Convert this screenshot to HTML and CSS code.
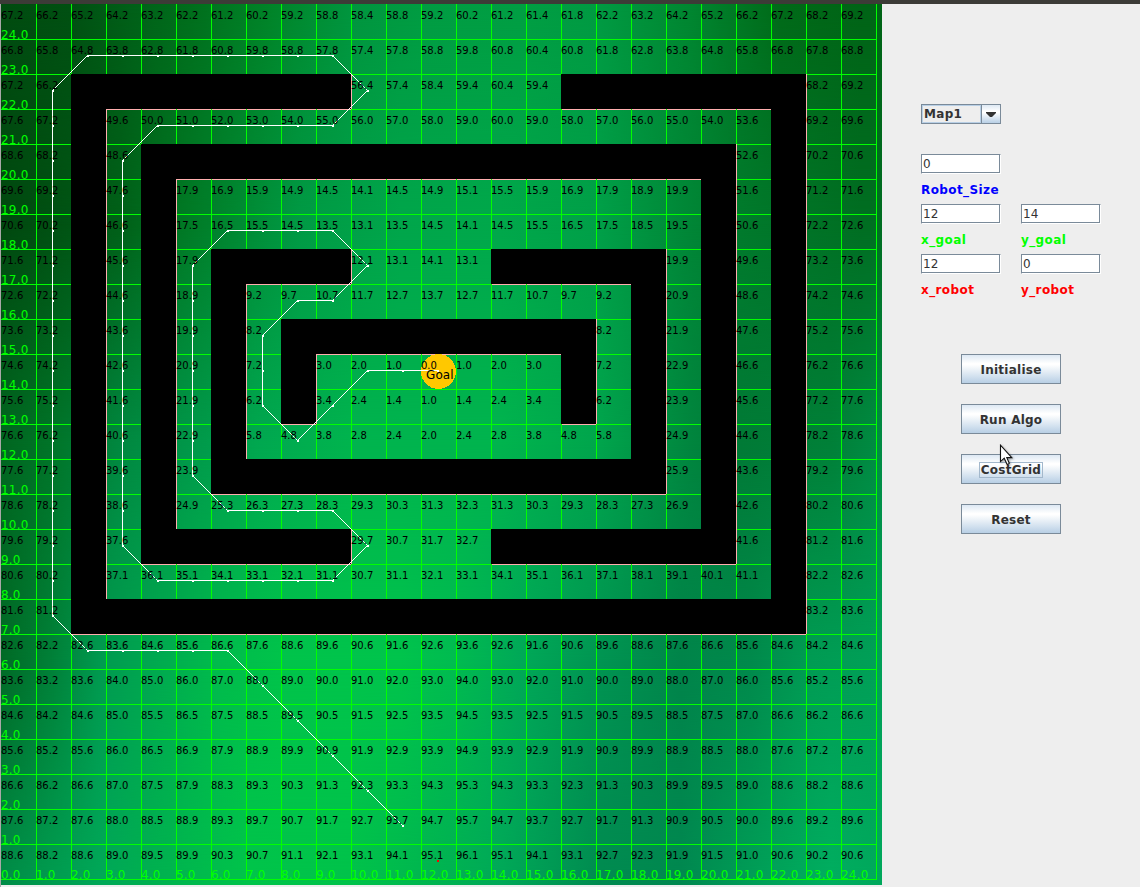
FILE: index.html
```html
<!DOCTYPE html>
<html lang="en">
<head>
<meta charset="utf-8">
<title>Path planner</title>
<link rel="stylesheet" href="styles.css">
</head>
<body>
<div class="titlebar"></div>
<div class="window">
  <main class="map">
    <div class="shade shade-1"></div>
    <div class="shade shade-2"></div>
    <div class="shade shade-3"></div>
    <div class="shade shade-4"></div>
    <div class="shade shade-5"></div>
    <div class="grid" id="grid"></div>
    <svg class="route" id="route" width="881" height="881" viewBox="1 4 881 881">
      <circle cx="438.5" cy="371.5" r="17.5" fill="#ffc800"/>
      <rect x="437" y="860" width="2" height="2" fill="#f00"/>
    </svg>
    <span class="goal">Goal</span>
  </main>
  <aside class="panel">
    <div class="combo"><span class="combo-text">Map1</span><span class="combo-arrow"><svg width="10" height="5" viewBox="0 0 10 5"><path d="M0 0H10V1L6 5H4L0 1Z" fill="#333"/></svg></span></div>
    <div class="fields">
      <div class="field"><div class="input">0</div><div class="label blue">Robot_Size</div></div>
      <div class="field"></div>
      <div class="field"><div class="input">12</div><div class="label green">x_goal</div></div>
      <div class="field"><div class="input">14</div><div class="label green">y_goal</div></div>
      <div class="field"><div class="input">12</div><div class="label red">x_robot</div></div>
      <div class="field"><div class="input">0</div><div class="label red">y_robot</div></div>
    </div>
    <div class="buttons">
      <div class="button"><span>Initialise</span></div>
      <div class="button"><span>Run Algo</span></div>
      <div class="button"><span class="focused">CostGrid</span></div>
      <div class="button"><span>Reset</span></div>
    </div>
    <svg class="cursor" width="16" height="24" viewBox="0 0 16 24"><path d="M1.5 1.2V17.6L5.2 14.2L8 20.3Q9.6 20.6 10.3 19.3L7.8 13.6H12.8Z" fill="#fff" stroke="#111" stroke-width="1.1"/></svg>
  </aside>
</div>
<script src="map.js"></script>
</body>
</html>
```
FILE: styles.css
```css
* { box-sizing: border-box; }
body {
  margin: 0;
  width: 1140px;
  height: 887px;
  overflow: hidden;
  background: #eee;
  font-family: "DejaVu Sans", sans-serif;
}
.titlebar { height: 4px; background: #3c3b37; }
.window { display: flex; height: 883px; border-left: 1px solid #a8a8a8; }
.map { position: relative; width: 881px; height: 881px; flex: none; overflow: hidden; }

/* Terrain: horizontal gradients blended into each other from top to bottom */
.shade { position: absolute; inset: 0; }
.shade-1 {
  background: linear-gradient(90deg, #004c10 0, #005012 70px, #006018 130px, #006e1c 190px, #008428 270px, #00953e 350px, #009c42 420px, #009e43 520px, #009a42 600px, #008630 690px, #006a18 780px, #006416 860px);
}
.shade-2 {
  background: linear-gradient(90deg, #00480f 0, #005012 50px, #006018 120px, #007824 180px, #008832 235px, #009a45 300px, #00a64b 400px, #00a84b 500px, #009f48 600px, #008838 680px, #007a2c 740px, #006e22 860px);
  -webkit-mask: linear-gradient(transparent 0, #000 220px);
  mask: linear-gradient(transparent 0, #000 220px);
}
.shade-3 {
  background: linear-gradient(90deg, #006620 0, #007428 50px, #008840 120px, #00984a 190px, #00a850 260px, #00b44e 350px, #00b44e 500px, #00a44c 600px, #00853e 690px, #007a36 740px, #008038 830px, #008c44 880px);
  -webkit-mask: linear-gradient(transparent 220px, #000 440px);
  mask: linear-gradient(transparent 220px, #000 440px);
}
.shade-4 {
  background: linear-gradient(90deg, #006a26 0, #008038 50px, #009a50 100px, #00a850 150px, #00bc4c 220px, #00c44a 280px, #00c44c 400px, #00bc50 450px, #00a858 520px, #009452 600px, #00844a 680px, #008a4c 750px, #009c54 810px, #00a058 880px);
  -webkit-mask: linear-gradient(transparent 440px, #000 660px);
  mask: linear-gradient(transparent 440px, #000 660px);
}
.shade-5 {
  background: linear-gradient(90deg, #008c48 0, #009c50 50px, #00a858 100px, #00b050 150px, #00c44a 250px, #00c24a 350px, #00b450 430px, #00a858 500px, #008a50 600px, #008850 680px, #00a058 760px, #00ae60 830px, #00a85c 880px);
  -webkit-mask: linear-gradient(transparent 660px, #000 881px);
  mask: linear-gradient(transparent 660px, #000 881px);
}

.grid {
  position: relative;
  display: grid;
  grid-template-columns: repeat(25, 35px);
  grid-auto-rows: 35px;
  width: 876px;
  height: 876px;
  border-right: 1px solid #0f0;
  border-bottom: 1px solid #0f0;
}
.cell {
  --left: #0f0;
  --top: #0f0;
  display: flex;
  flex-direction: column;
  justify-content: space-between;
  padding-top: 6px;
  background:
    linear-gradient(var(--left), var(--left)) 0 0 / 1px 100% no-repeat,
    linear-gradient(var(--top), var(--top)) 0 0 / 100% 1px no-repeat;
}
.first-col { --left: transparent; }
.first-row { --top: transparent; }
.after-wall { --left: #ffafaf; }
.below-wall { --top: #ffafaf; }
.wall { background: #000; }
.value { position: relative; z-index: 2; font-size: 10px; line-height: 12px; color: #000; }
.axis { position: relative; z-index: 2; font-size: 12px; line-height: 14px; margin-bottom: -3px; letter-spacing: .2px; color: #0f0; }
.route { position: absolute; left: 0; top: 0; z-index: 1; shape-rendering: crispEdges; }
.goal { position: absolute; left: 425px; top: 364px; z-index: 3; font-size: 12px; line-height: 14px; letter-spacing: .1px; color: #000; }

.panel {
  position: relative;
  flex: 1;
  padding: 100px 0 0 39px;
  font-size: 12px;
  line-height: 14px;
  color: #333;
}
.combo {
  display: flex;
  width: 80px;
  height: 20px;
  border: 1px solid #7a8a99;
}
.combo-text { flex: 1; border: 1px solid #b8cfe5; padding: 1px 0 0 1px; font-weight: bold; letter-spacing: .3px; }
.combo-arrow {
  display: flex;
  align-items: center;
  justify-content: center;
  width: 19px;
  padding-top: 1px;
  border-left: 1px solid #7a8a99;
  background: linear-gradient(#dde8f3, #fff 35%, #fff 42%, #b8cfe5);
}
.fields { display: grid; grid-template-columns: 100px 100px; grid-auto-rows: 50px; padding-top: 30px; }
.input {
  width: 80px;
  height: 20px;
  padding: 2px 0 0 1px;
  background: #fff;
  border: 1px solid;
  border-color: #7a8a99 #fff #fff #7a8a99;
  box-shadow: inset -1px -1px 0 #7a8a99;
}
.label { margin-top: 9px; font-weight: bold; letter-spacing: .4px; line-height: 14px; }
.blue { color: #00f; }
.green { color: #0f0; }
.red { color: #f00; }
.buttons { display: grid; gap: 20px; padding: 50px 0 0 40px; }
.button {
  display: flex;
  align-items: center;
  justify-content: center;
  width: 100px;
  height: 30px;
  padding-top: 2px;
  border: 1px solid #7a8a99;
  background: linear-gradient(#dde8f3, #fff 30%, #fff 35%, #b8cfe5);
  font-weight: bold;
  letter-spacing: .25px;
}
.focused { padding: 0 1px; outline: 1px solid #a3b8cc; }
.cursor { position: absolute; left: 117px; top: 440px; filter: drop-shadow(1px 1px 1px rgba(0, 0, 0, .35)); }
```
FILE: map.js
```js
// Cost of every cell, top row first; "#n" is a run of n wall cells.
const rows = `
67.2 66.2 65.2 64.2 63.2 62.2 61.2 60.2 59.2 58.8 58.4 58.8 59.2 60.2 61.2 61.4 61.8 62.2 63.2 64.2 65.2 66.2 67.2 68.2 69.2
66.8 65.8 64.8 63.8 62.8 61.8 60.8 59.8 58.8 57.8 57.4 57.8 58.8 59.8 60.8 60.4 60.8 61.8 62.8 63.8 64.8 65.8 66.8 67.8 68.8
67.2 66.2 #8 56.4 57.4 58.4 59.4 60.4 59.4 #7 68.2 69.2
67.6 67.2 #1 49.6 50.0 51.0 52.0 53.0 54.0 55.0 56.0 57.0 58.0 59.0 60.0 59.0 58.0 57.0 56.0 55.0 54.0 53.6 #1 69.2 69.6
68.6 68.2 #1 48.6 #17 52.6 #1 70.2 70.6
69.6 69.2 #1 47.6 #1 17.9 16.9 15.9 14.9 14.5 14.1 14.5 14.9 15.1 15.5 15.9 16.9 17.9 18.9 19.9 #1 51.6 #1 71.2 71.6
70.6 70.2 #1 46.6 #1 17.5 16.5 15.5 14.5 13.5 13.1 13.5 14.5 14.1 14.5 15.5 16.5 17.5 18.5 19.5 #1 50.6 #1 72.2 72.6
71.6 71.2 #1 45.6 #1 17.9 #4 12.1 13.1 14.1 13.1 #5 19.9 #1 49.6 #1 73.2 73.6
72.6 72.2 #1 44.6 #1 18.9 #1 9.2 9.7 10.7 11.7 12.7 13.7 12.7 11.7 10.7 9.7 9.2 #1 20.9 #1 48.6 #1 74.2 74.6
73.6 73.2 #1 43.6 #1 19.9 #1 8.2 #9 8.2 #1 21.9 #1 47.6 #1 75.2 75.6
74.6 74.2 #1 42.6 #1 20.9 #1 7.2 #1 3.0 2.0 1.0 0.0 1.0 2.0 3.0 #1 7.2 #1 22.9 #1 46.6 #1 76.2 76.6
75.6 75.2 #1 41.6 #1 21.9 #1 6.2 #1 3.4 2.4 1.4 1.0 1.4 2.4 3.4 #1 6.2 #1 23.9 #1 45.6 #1 77.2 77.6
76.6 76.2 #1 40.6 #1 22.9 #1 5.8 4.8 3.8 2.8 2.4 2.0 2.4 2.8 3.8 4.8 5.8 #1 24.9 #1 44.6 #1 78.2 78.6
77.6 77.2 #1 39.6 #1 23.9 #13 25.9 #1 43.6 #1 79.2 79.6
78.6 78.2 #1 38.6 #1 24.9 25.3 26.3 27.3 28.3 29.3 30.3 31.3 32.3 31.3 30.3 29.3 28.3 27.3 26.9 #1 42.6 #1 80.2 80.6
79.6 79.2 #1 37.6 #6 29.7 30.7 31.7 32.7 #7 41.6 #1 81.2 81.6
80.6 80.2 #1 37.1 36.1 35.1 34.1 33.1 32.1 31.1 30.7 31.1 32.1 33.1 34.1 35.1 36.1 37.1 38.1 39.1 40.1 41.1 #1 82.2 82.6
81.6 81.2 #21 83.2 83.6
82.6 82.2 82.6 83.6 84.6 85.6 86.6 87.6 88.6 89.6 90.6 91.6 92.6 93.6 92.6 91.6 90.6 89.6 88.6 87.6 86.6 85.6 84.6 84.2 84.6
83.6 83.2 83.6 84.0 85.0 86.0 87.0 88.0 89.0 90.0 91.0 92.0 93.0 94.0 93.0 92.0 91.0 90.0 89.0 88.0 87.0 86.0 85.6 85.2 85.6
84.6 84.2 84.6 85.0 85.5 86.5 87.5 88.5 89.5 90.5 91.5 92.5 93.5 94.5 93.5 92.5 91.5 90.5 89.5 88.5 87.5 87.0 86.6 86.2 86.6
85.6 85.2 85.6 86.0 86.5 86.9 87.9 88.9 89.9 90.9 91.9 92.9 93.9 94.9 93.9 92.9 91.9 90.9 89.9 88.9 88.5 88.0 87.6 87.2 87.6
86.6 86.2 86.6 87.0 87.5 87.9 88.3 89.3 90.3 91.3 92.3 93.3 94.3 95.3 94.3 93.3 92.3 91.3 90.3 89.9 89.5 89.0 88.6 88.2 88.6
87.6 87.2 87.6 88.0 88.5 88.9 89.3 89.7 90.7 91.7 92.7 93.7 94.7 95.7 94.7 93.7 92.7 91.7 91.3 90.9 90.5 90.0 89.6 89.2 89.6
88.6 88.2 88.6 89.0 89.5 89.9 90.3 90.7 91.1 92.1 93.1 94.1 95.1 96.1 95.1 94.1 93.1 92.7 92.3 91.9 91.5 91.0 90.6 90.2 90.6
`.trim().split("\n").map(line => line.split(" ").flatMap(t =>
  t[0] === "#" ? Array(+t.slice(1)).fill("#") : [t]));

const grid = document.getElementById("grid");
rows.forEach((row, r) => row.forEach((value, c) => {
  const cell = document.createElement("div");
  cell.className = "cell";
  if (value === "#") {
    cell.classList.add("wall");
  } else {
    if (c === 0) cell.classList.add("first-col");
    else if (row[c - 1] === "#") cell.classList.add("after-wall");
    if (r === 0) cell.classList.add("first-row");
    else if (rows[r - 1][c] === "#") cell.classList.add("below-wall");
    cell.innerHTML = `<span class="value">${value}</span>`;
    if (c === 0 || r === 24) {
      cell.innerHTML += `<span class="axis">${(r === 24 ? c : 24 - r).toFixed(1)}</span>`;
    }
  }
  grid.append(cell);
}));

// Route corners as [column, row], from the goal back to the robot.
const corners = [[12,10],[10,10],[8,12],[7,11],[7,9],[8,8],[9,8],[10,7],[9,6],[6,6],[5,7],[5,13],
  [6,14],[9,14],[10,15],[9,16],[4,16],[3,15],[3,4],[4,3],[9,3],[10,2],[9,1],[2,1],[1,2],[1,17],
  [2,18],[6,18],[11,23]];
const px = c => 17.5 + 35 * c;
const py = r => 20.5 + 35 * r;
let shapes = `<polyline fill="none" stroke="#fff" points="${corners.map(([c, r]) => px(c) + "," + py(r)).join(" ")}"/>`;
corners.forEach(([c, r], i) => {
  const [nc, nr] = corners[i + 1] || [c, r];
  const steps = Math.max(Math.abs(nc - c), Math.abs(nr - r), 1);
  for (let s = 0; s < steps; s++) {
    const x = px(c + (nc - c) * s / steps) - .5;
    const y = py(r + (nr - r) * s / steps) - .5;
    shapes += `<rect x="${x}" y="${y}" width="2" height="2" fill="#fff"/>`;
  }
});
document.getElementById("route").innerHTML += shapes;
```
